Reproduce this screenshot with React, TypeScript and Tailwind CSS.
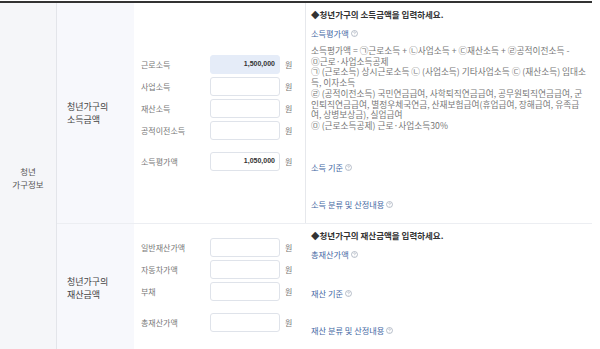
import React from 'react';

const KR = { fontFamily: '"Noto Sans CJK KR", "Noto Sans", sans-serif' };

function InfoIcon() {
  return (
    <svg className="ml-[2px] inline-block align-[0px]" width="7" height="7" viewBox="0 0 8 8">
      <circle cx="4" cy="4" r="3.4" fill="none" stroke="#9aa3b3" strokeWidth="0.8" />
      <path d="M3 3.1c0-.6.5-1 1-1s1 .4 1 .9c0 .7-1 .8-1 1.5" fill="none" stroke="#9aa3b3" strokeWidth="0.7" />
      <circle cx="4" cy="5.8" r="0.45" fill="#9aa3b3" />
    </svg>
  );
}

function Field({ label, value, blue, last }: { label: string; value?: string; blue?: boolean; last?: boolean }) {
  return (
    <div className={`flex items-center h-[19px] ${last ? 'mt-[12px]' : 'mb-[3px]'}`}>
      <span className="w-[76px] pl-[7px] text-[8px] text-[#777]">{label}</span>
      <div
        className={`w-[70px] h-[19px] rounded-[3px] border flex items-center justify-end pr-[4px] ${
          blue ? 'bg-[#e5ecf8] border-[#e5ecf8]' : 'bg-white border-[#dfe3ea]'
        }`}
      >
        <span className="text-[7px] font-bold text-[#333]" style={{ fontFamily: '"Liberation Sans", Arial, sans-serif' }}>
          {value}
        </span>
      </div>
      <span className="ml-[5px] text-[8px] text-[#777]">원</span>
    </div>
  );
}

function Link({ text, className }: { text: string; className?: string }) {
  return (
    <div className={`text-[8.2px] leading-[12px] text-[#4467a3] ${className ?? ''}`}>
      {text}
      <InfoIcon />
    </div>
  );
}

const formula = [
  '소득평가액 = ㉠근로소득 + ㉡사업소득 + ㉢재산소득 + ㉣공적이전소득 -',
  '㉤근로·사업소득공제',
  '㉠ (근로소득) 상시근로소득 ㉡ (사업소득) 기타사업소득 ㉢ (재산소득) 임대소',
  '득, 이자소득',
  '㉣ (공적이전소득) 국민연금급여, 사학퇴직연금급여, 공무원퇴직연금급여, 군',
  '인퇴직연금급여, 별정우체국연금, 산재보험급여(휴업급여, 장해급여, 유족급',
  '여, 상병보상금), 실업급여',
  '㉤ (근로소득공제) 근로·사업소득30%',
];

export default function App() {
  return (
    <div className="w-[600px] h-[349px] overflow-hidden bg-white" style={KR}>
      <div className="w-[592px] mt-px border-t-2 border-[#333] flex">
        <div className="w-[57px] bg-[#f5f6f9] border-r border-[#e3e5ea] flex items-center justify-center text-center">
          <div className="text-[8.5px] leading-[13px] text-[#555]">
            청년
            <br />
            가구정보
          </div>
        </div>

        <div className="flex-1 flex flex-col">
          {/* 소득 */}
          <div className="flex h-[221px] border-b border-[#eceef2]">
            <div className="w-[77px] bg-[#f7f8fc] flex items-center pl-[10px]">
              <div className="text-[9px] leading-[13px] text-[#444]">
                청년가구의
                <br />
                소득금액
              </div>
            </div>
            <div className="w-[172px] border-r border-[#e6e8ec] pt-[52px]">
              <Field label="근로소득" value="1,500,000" blue />
              <Field label="사업소득" />
              <Field label="재산소득" />
              <Field label="공적이전소득" />
              <Field label="소득평가액" value="1,050,000" last />
            </div>
            <div className="flex-1 pl-[5px] pt-[5px]">
              <div className="text-[8.5px] leading-[12px] font-bold text-[#333]">◆청년가구의 소득금액을 입력하세요.</div>
              <Link text="소득평가액" className="mt-[7px]" />
              <div className="mt-[7px] text-[8.7px] leading-[10.7px] text-[#777] whitespace-nowrap">
                {formula.map((l) => (
                  <div key={l}>{l}</div>
                ))}
              </div>
              <Link text="소득 기준" className="mt-[29px]" />
              <Link text="소득 분류 및 산정내용" className="mt-[25px]" />
            </div>
          </div>

          {/* 재산 */}
          <div className="flex h-[128px]">
            <div className="w-[77px] bg-[#f7f8fc] flex items-center pl-[10px]">
              <div className="text-[9px] leading-[13px] text-[#444]">
                청년가구의
                <br />
                재산금액
              </div>
            </div>
            <div className="w-[172px] pt-[14px]">
              <Field label="일반재산가액" />
              <Field label="자동차가액" />
              <Field label="부채" />
              <Field label="총재산가액" last />
            </div>
            <div className="flex-1 pl-[5px] pt-[5px]">
              <div className="text-[8.5px] leading-[12px] font-bold text-[#333]">◆청년가구의 재산금액을 입력하세요.</div>
              <Link text="총재산가액" className="mt-[7px]" />
              <Link text="재산 기준" className="mt-[27px]" />
              <Link text="재산 분류 및 산정내용" className="mt-[25px]" />
            </div>
          </div>
        </div>
      </div>
    </div>
  );
}
